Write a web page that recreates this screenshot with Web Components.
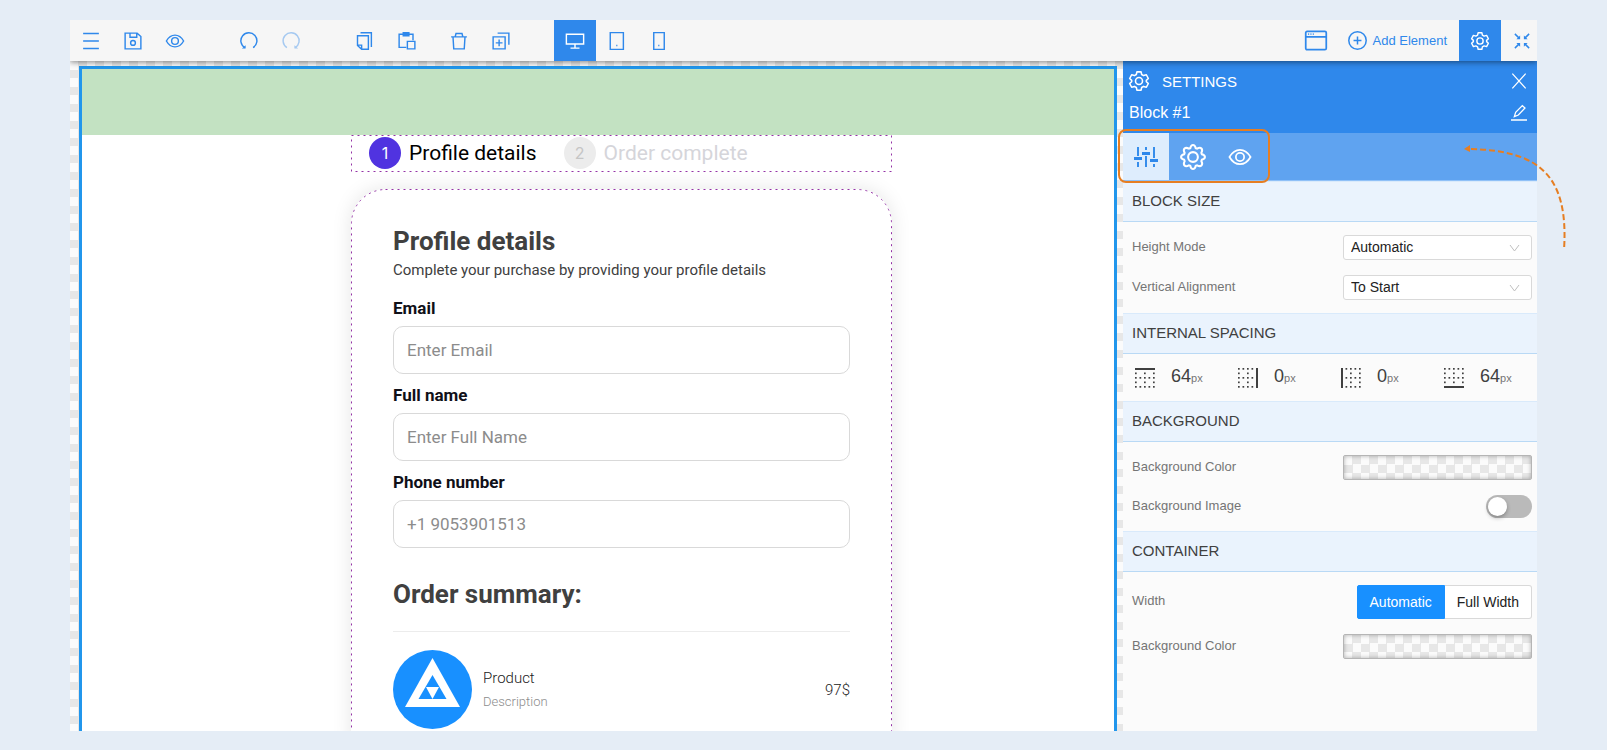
<!DOCTYPE html>
<html lang="en">
<head>
<meta charset="UTF-8">
<title>Block editor</title>
<style>
  :root {
    --blue: #2f88eb;
    --checker: repeating-conic-gradient(#e7e7e7 0% 25%, #fbfbfb 0% 50%);
  }

  body {
    margin: 0;
    background: #e5edf6;
    font-family: "Liberation Sans", Arial, sans-serif;
  }
</style>
</head>
<body>
<page-editor></page-editor>

<script>
/**
 * Iconos de la interfaz, dibujados sobre una rejilla de 24x24
 */
const ICONS = {
  menu: '<path d="M1.500 2h21M1.500 12h21M1.500 22h21"/>',
  save: '<path d="M1.500 1.500h16l5 4.500v16.500h-21zM8 2v5h9V2"/><circle cx="12" cy="14.500" r="3.200"/>',
  eye: '<path d="M.500 12C6.500 1.500 17.500 1.500 23.500 12C17.500 22.500 6.500 22.500 .500 12z"/><circle cx="12" cy="12" r="4.500"/>',
  undo: '<path d="M6.500 21A10.700 10.700 0 1 1 17.500 20.800"/><path d="M7.500 17.500V22H2.500z" fill="currentColor" stroke="none"/>',
  redo: '<path d="M17.500 21A10.700 10.700 0 1 0 6.500 20.800"/><path d="M16.500 17.500V22h5z" fill="currentColor" stroke="none"/>',
  copy: '<path d="M2 5h14.500v18H7.500L2 18zM2 17.500h5.500V23M6 1h14.500v19"/>',
  paste: '<path d="M11 20.500H1.500V3h18.500v8M12.500 12.500h10v10h-10z"/><path d="M7 1h7.500v4H7z" fill="currentColor"/>',
  trash: '<path d="M1.500 6.500h21M7 6l1-4h8l1 4M4 6.500l1 16h14l1-16"/>',
  duplicate: '<path d="M1.500 6.500h16v16h-16zM7.500 1.500h15v15.500M9.500 10v9M5 14.500h9"/>',
  desktop: '<path d="M.500 3h23v13H.500zM12 16v5.500M6 21.500h12"/>',
  tablet: '<path d="M3 .800h17.500v22.400H3z"/><path d="M11 18h1.500"/>',
  phone: '<path d="M5 .800h14v22.400H5z"/><path d="M11 18h1.500"/>',
  plus: '<circle cx="12" cy="12" r="11"/><path d="M12 7v10M7 12h10"/>',
  window: '<rect x="0.800" y="1.500" width="22.400" height="20" rx="1.500"/><path d="M1 7.500h22M3.500 4.500h1M6 4.500h1M8.500 4.500h1" />',
  collapse: '<path d="M2.500 2.500l6 6M21.500 2.500l-6 6M2.500 21.500l6-6M21.500 21.500l-6-6"/><path d="M9.500 4.500v5h-5zM14.500 4.500v5h5zM9.500 19.500v-5h-5zM14.500 19.500v-5h5z" fill="currentColor" stroke="none"/>',
  gear: '<path d="M9.500 1h5l.7 3.200 2.300 1.300 3.300-1L23.200 9l-2.400 2.200v1.600l2.400 2.200-2.400 4.500-3.300-1-2.300 1.300-.7 3.200h-5l-.7-3.200-2.300-1.300-3.300 1L.800 15l2.400-2.200v-1.600L.800 9l2.400-4.500 3.300 1 2.300-1.300z" stroke-linejoin="round"/><circle cx="12" cy="12" r="4.200"/>',
  cog: '<path d="M9.500 3.800Q10.200 1 12 1T14.500 3.800L15.800 4.300Q18.500 2.800 19.800 4.200T19.700 8.200L20.200 9.500Q23 10.200 23 12T20.200 14.500L19.700 15.800Q21.200 18.500 19.800 19.800T15.800 19.700L14.500 20.200Q13.800 23 12 23T9.500 20.200L8.200 19.700Q5.500 21.200 4.200 19.800T4.300 15.800L3.800 14.500Q1 13.800 1 12T3.800 9.500L4.300 8.200Q2.800 5.500 4.200 4.200T8.200 4.300z"/><circle cx="12" cy="12" r="4.500"/>',
  sliders: '<path d="M4 2v9M4 17v5M12 2v3M12 11v11M20 2v11M20 19v3"/><path d="M0 13.500h8M8 8.500h8M16 15.500h8" stroke-width="3"/>',
  close: '<path d="M2 1l20 22M22 1L2 23"/>',
  pencil: '<path d="M5 17.500l2-6.500L17 1l4 3.500L11 15zM0 22.500h24"/>'
};

/**
 * UiIcon - Icono SVG, el tamaño se toma de --icon-size
 */
class UiIcon extends HTMLElement {
  connectedCallback() {
    if (this.shadowRoot) return;
    this.attachShadow({ mode: 'open' });
    this.shadowRoot.innerHTML = `
      <style>
        :host {
          display: inline-block;
          width: var(--icon-size, 18px);
          height: var(--icon-size, 18px);
          flex: none;
        }

        svg {
          display: block;
          width: 100%;
          height: 100%;
          overflow: visible;
        }
      </style>
      <svg viewBox="0 0 24 24" fill="none" stroke="currentColor" stroke-width="1.900" aria-hidden="true">${ICONS[this.getAttribute('name')]}</svg>
    `;
  }
}

/**
 * ToolButton - Botón de la barra superior
 */
class ToolButton extends HTMLElement {
  connectedCallback() {
    this.attachShadow({ mode: 'open' });
    this.shadowRoot.innerHTML = `
      <style>
        :host {
          display: flex;
          flex: none;
        }

        button {
          display: flex;
          align-items: center;
          justify-content: center;
          gap: 6px;
          min-width: 42px;
          height: 41px;
          padding: 0;
          border: 0;
          background: none;
          color: var(--blue);
          font: inherit;
          font-size: 13px;
          cursor: pointer;
        }

        button:disabled {
          opacity: 0.4;
        }

        :host([active]) button {
          background: var(--blue);
          color: #fff;
        }
      </style>
      <button aria-label="${this.getAttribute('label')}" ${this.hasAttribute('off') ? 'disabled' : ''}>
        <ui-icon name="${this.getAttribute('icon')}"></ui-icon><slot></slot>
      </button>
    `;
  }
}

/**
 * EditorToolbar - Barra de herramientas superior
 */
class EditorToolbar extends HTMLElement {
  connectedCallback() {
    this.attachShadow({ mode: 'open' });
    this.shadowRoot.innerHTML = `
      <style>
        :host {
          display: flex;
          height: 41px;
          background: #f6f6f6;
          box-shadow: 0 1px 6px rgba(0, 0, 0, 0.5);
          /* la sombra solo cae hacia abajo */
          clip-path: inset(0 0 -8px 0);
          position: relative;
          z-index: 2;
        }

        .groups {
          display: flex;
          flex: 1;
          gap: 32px;
        }

        .group {
          display: flex;
        }

        .edit {
          gap: 10px;
        }

        .end {
          display: flex;
        }

        .window {
          --icon-size: 22px;
          margin-right: 11px;
        }

        .add {
          --icon-size: 19px;
          margin-right: 12px;
        }

        .fold {
          margin-right: -6px;
        }
      </style>
      <div class="groups">
        <div class="group">
          <tool-button icon="menu" label="Menu"></tool-button>
          <tool-button icon="save" label="Save"></tool-button>
          <tool-button icon="eye" label="Preview"></tool-button>
        </div>
        <div class="group">
          <tool-button icon="undo" label="Undo"></tool-button>
          <tool-button icon="redo" label="Redo" off></tool-button>
        </div>
        <div class="group edit">
          <div class="group">
            <tool-button icon="copy" label="Copy"></tool-button>
            <tool-button icon="paste" label="Paste"></tool-button>
          </div>
          <div class="group">
            <tool-button icon="trash" label="Delete"></tool-button>
            <tool-button icon="duplicate" label="Duplicate"></tool-button>
          </div>
        </div>
        <div class="group">
          <tool-button icon="desktop" label="Desktop" active></tool-button>
          <tool-button icon="tablet" label="Tablet"></tool-button>
          <tool-button icon="phone" label="Phone"></tool-button>
        </div>
      </div>
      <div class="end">
        <tool-button class="window" icon="window" label="Window"></tool-button>
        <tool-button class="add" icon="plus" label="Add Element">Add Element</tool-button>
        <tool-button icon="gear" label="Settings" active></tool-button>
        <tool-button class="fold" icon="collapse" label="Collapse"></tool-button>
      </div>
    `;
  }
}

/**
 * FormField - Etiqueta y caja de texto del formulario
 */
class FormField extends HTMLElement {
  connectedCallback() {
    this.attachShadow({ mode: 'open' });
    this.shadowRoot.innerHTML = `
      <style>
        :host {
          display: block;
          margin-bottom: 9px;
        }

        label {
          display: block;
          margin-bottom: 6px;
          color: #101018;
          font-size: 17px;
          font-weight: 700;
          line-height: 24px;
        }

        input {
          display: block;
          box-sizing: border-box;
          width: 100%;
          height: 48px;
          padding: 0 13px;
          border: 1px solid #d9d9d9;
          border-radius: 10px;
          background: #fff;
          font: inherit;
          font-size: 17px;
        }

        input::placeholder {
          color: #8c8c8c;
          opacity: 1;
        }
      </style>
      <label for="field">${this.getAttribute('label')}</label>
      <input id="field" type="${this.getAttribute('type')}" placeholder="${this.getAttribute('placeholder')}">
    `;
  }
}

/**
 * StepItem - Paso numerado del proceso de compra
 */
class StepItem extends HTMLElement {
  connectedCallback() {
    this.attachShadow({ mode: 'open' });
    this.shadowRoot.innerHTML = `
      <style>
        :host {
          display: flex;
          align-items: center;
          gap: 8px;
          color: #d5d5da;
          font-size: 21px;
          line-height: 32px;
          white-space: nowrap;
        }

        .number {
          display: grid;
          place-items: center;
          width: 32px;
          height: 32px;
          border-radius: 50%;
          background: #ececec;
          color: #c5c5c5;
          font-family: Inter, sans-serif;
          font-size: 16px;
        }

        :host([active]) {
          color: #000;
        }

        :host([active]) .number {
          background: #5033e0;
          color: #fff;
        }
      </style>
      <span class="number">${this.getAttribute('number')}</span>
      <span><slot></slot></span>
    `;
  }
}

/**
 * DashOutline - Contorno discontinuo que rodea al contenido editable
 */
class DashOutline extends HTMLElement {
  connectedCallback() {
    this.attachShadow({ mode: 'open' });
    this.shadowRoot.innerHTML = `
      <style>
        :host {
          position: absolute;
          inset: 0 1px 1px 0;
          pointer-events: none;
        }

        svg {
          display: block;
          width: 100%;
          height: 100%;
          overflow: visible;
        }
      </style>
      <svg aria-hidden="true">
        <rect x="0.500" y="0.500" width="100%" height="100%" rx="${this.getAttribute('radius')}"
          fill="none" stroke="#9433a6" stroke-dasharray="2 4"/>
      </svg>
    `;
  }
}

/**
 * PageCanvas - Lienzo con la página que se edita
 */
class PageCanvas extends HTMLElement {
  connectedCallback() {
    this.attachShadow({ mode: 'open' });
    this.shadowRoot.innerHTML = `
      <style>
        :host {
          display: flex;
          flex: 1;
          min-width: 0;
          padding: 5px 6px 0 9px;
          overflow: hidden;
          background: var(--checker) 0 0 / 17px 17px;
          font-family: Roboto, sans-serif;
        }

        .block {
          flex: 1;
          min-width: 0;
          border: 3px solid #2196ec;
          border-bottom: 0;
          background: #fff;
          overflow: hidden;
        }

        .spacing {
          height: 66px;
          background: #c3e2c2;
        }

        .columns {
          display: grid;
          grid-template-columns: 269fr 541fr 222fr;
        }

        .content {
          grid-column: 2;
          min-width: 0;
        }

        .steps {
          display: flex;
          gap: 27px;
          position: relative;
          padding: 2px 18px 3px;
        }

        .card {
          position: relative;
          margin-top: 17px;
          padding: 36px 42px;
          border-radius: 34px;
          box-shadow: 0 0 20px rgba(0, 0, 0, 0.1);
          color: #404040;
        }

        h2 {
          margin: 0;
          font-size: 26px;
          font-weight: 700;
          line-height: 32px;
        }

        p {
          margin: 0 0 13px;
          font-size: 15px;
          line-height: 26px;
        }

        .summary {
          margin-top: 30px;
          padding-bottom: 21px;
          border-bottom: 1px solid #ececec;
        }

        .product {
          display: flex;
          align-items: center;
          gap: 11px;
          margin-top: 18px;
          font-size: 15px;
          font-weight: 300;
          line-height: 24px;
        }

        .product svg {
          width: 79px;
          height: 79px;
        }

        .text {
          flex: 1;
          color: #222;
        }

        small {
          display: block;
          color: #8c8c8c;
          font-size: 13px;
        }

        .price {
          color: #222;
        }
      </style>
      <div class="block">
        <div class="spacing"></div>
        <div class="columns">
          <div class="content">
            <div class="steps">
              <step-item number="1" active>Profile details</step-item>
              <step-item number="2">Order complete</step-item>
              <dash-outline radius="0"></dash-outline>
            </div>
            <div class="card">
              <h2>Profile details</h2>
              <p>Complete your purchase by providing your profile details</p>
              <form-field label="Email" type="email" placeholder="Enter Email"></form-field>
              <form-field label="Full name" type="text" placeholder="Enter Full Name"></form-field>
              <form-field label="Phone number" type="tel" placeholder="+1 9053901513"></form-field>
              <h2 class="summary">Order summary:</h2>
              <div class="product">
                <svg viewBox="0 0 79 79" aria-hidden="true">
                  <circle cx="39.500" cy="39.500" r="39.500" fill="#1890ff"/>
                  <path d="M39.500 8L67 57H12z" fill="#fff"/>
                  <path d="M39.500 25L53.500 49h-28z" fill="#1890ff"/>
                  <path d="M33 37h13l-6.500 12z" fill="#fff"/>
                </svg>
                <div class="text">Product<small>Description</small></div>
                <span class="price">97$</span>
              </div>
              <dash-outline radius="34"></dash-outline>
            </div>
          </div>
        </div>
      </div>
    `;
  }
}

/**
 * SettingsSection - Sección con título del panel de ajustes
 */
class SettingsSection extends HTMLElement {
  connectedCallback() {
    this.attachShadow({ mode: 'open' });
    this.shadowRoot.innerHTML = `
      <style>
        :host {
          display: block;
        }

        h3 {
          box-sizing: border-box;
          height: 41px;
          margin: 0;
          padding: 0 9px;
          border-top: 1px solid #d9eafb;
          border-bottom: 1px solid #b9d9f5;
          background: #eaf3fd;
          color: #404040;
          font-size: 15px;
          font-weight: 400;
          line-height: 38px;
        }

        .rows {
          display: flex;
          flex-direction: column;
          gap: 15px;
          padding: 13px 5px 13px 9px;
        }
      </style>
      <h3>${this.getAttribute('heading')}</h3>
      <div class="rows"><slot></slot></div>
    `;
  }
}

/**
 * SettingRow - Nombre del ajuste y su control según el tipo
 */
class SettingRow extends HTMLElement {
  connectedCallback() {
    this.attachShadow({ mode: 'open' });
    this.render();
  }

  /**
   * Devuelve el control que corresponde al tipo
   */
  control() {
    const value = this.getAttribute('value');
    switch (this.getAttribute('type')) {
      case 'select':
        return `<span class="select"><select id="control"><option>${value}</option></select>
          <svg viewBox="0 0 11 8" aria-hidden="true"><path d="M1 1l4.500 6L10 1" fill="none" stroke="#bfbfbf"/></svg></span>`;
      case 'color':
        return '<button id="control" class="color"></button>';
      case 'toggle':
        return '<input id="control" class="toggle" type="checkbox" role="switch">';
      default:
        return '<div class="choice"><button id="control" class="on">Automatic</button><button>Full Width</button></div>';
    }
  }

  /**
   * Renderiza el contenido del componente
   */
  render() {
    this.shadowRoot.innerHTML = `
      <style>
        :host {
          display: flex;
          align-items: center;
          justify-content: space-between;
        }

        label {
          padding-bottom: 2px;
          color: #757575;
          font-size: 13px;
          line-height: 20px;
        }

        .select {
          display: grid;
          width: 189px;
        }

        select, .select svg {
          grid-area: 1 / 1;
        }

        select {
          appearance: none;
          height: 25px;
          padding: 0 7px 2px;
          border: 1px solid #d9d9d9;
          border-radius: 3px;
          background: #fff;
          color: #222;
          font: inherit;
          font-size: 14px;
        }

        .select svg {
          width: 11px;
          height: 8px;
          margin-right: 12px;
          place-self: center end;
          pointer-events: none;
        }

        .color {
          width: 189px;
          height: 25px;
          border: 1px solid #b5b5b5;
          border-radius: 2px;
          background: var(--checker) 0 0 / 17px 17px;
          box-shadow: inset 0 0 4px rgba(0, 0, 0, 0.3);
        }

        .toggle {
          appearance: none;
          display: flex;
          align-items: center;
          box-sizing: border-box;
          width: 46px;
          height: 23px;
          margin: 0;
          padding: 0 2px;
          border-radius: 12px;
          background: #bababa;
        }

        .toggle::before {
          content: "";
          width: 19px;
          height: 19px;
          border-radius: 50%;
          background: #fff;
          box-shadow: 0 2px 4px rgba(0, 0, 0, 0.3);
        }

        .choice {
          display: flex;
        }

        .choice button {
          height: 34px;
          padding: 0 12px;
          border: 1px solid #d9d9d9;
          border-left: 0;
          border-radius: 0 3px 3px 0;
          background: #fff;
          color: #222;
          font: inherit;
          font-size: 14px;
        }

        .choice .on {
          border: 1px solid #1890ff;
          border-radius: 2px 0 0 2px;
          background: #1890ff;
          color: #fff;
        }
      </style>
      <label for="control">${this.getAttribute('label')}</label>
      ${this.control()}
    `;
  }
}

/**
 * SpacingValue - Espaciado interno de un lado del bloque
 */
class SpacingValue extends HTMLElement {
  connectedCallback() {
    const bars = {
      top: 'M0 1h20',
      right: 'M19 0v20',
      left: 'M1 0v20',
      bottom: 'M0 19h20'
    };
    const side = this.getAttribute('side');
    let dots = '';
    for (let x = 0; x < 5; x++) {
      for (let y = 0; y < 5; y++) {
        const edge = { top: y === 0, right: x === 4, left: x === 0, bottom: y === 4 }[side];
        // el interior solo lleva la cruz central
        const hole = x % 2 === 1 && y % 2 === 1;
        if (!edge && !hole) dots += `<rect x="${x * 4.500}" y="${y * 4.500}" width="1.700" height="1.700"/>`;
      }
    }
    this.attachShadow({ mode: 'open' });
    this.shadowRoot.innerHTML = `
      <style>
        :host {
          display: flex;
          align-items: center;
          gap: 16px;
          height: 21px;
          color: #404040;
          font-size: 18px;
          line-height: 21px;
        }

        svg {
          width: 20px;
          height: 20px;
        }

        small {
          color: #757575;
          font-size: 11px;
        }
      </style>
      <svg viewBox="0 0 20 20" aria-hidden="true" fill="#404040">
        ${dots}<path d="${bars[side]}" stroke="#404040" stroke-width="2"/>
      </svg>
      <span>${this.getAttribute('value')}<small>px</small></span>
    `;
  }
}

/**
 * SettingsPanel - Panel lateral de ajustes del bloque
 */
class SettingsPanel extends HTMLElement {
  connectedCallback() {
    this.attachShadow({ mode: 'open' });
    this.shadowRoot.innerHTML = `
      <style>
        :host {
          display: block;
          position: relative;
          flex: none;
          width: 414px;
          background: #fbfbfb;
        }

        button {
          display: grid;
          place-items: center;
          padding: 0;
          border: 0;
          background: none;
          color: #fff;
        }

        header {
          box-sizing: border-box;
          height: 72px;
          padding: 4px 10px 4px 6px;
          background: var(--blue);
          color: #fff;
        }

        .line {
          display: flex;
          align-items: center;
          height: 32px;
          font-size: 16px;
        }

        .line span {
          flex: 1;
        }

        .title {
          gap: 13px;
          font-size: 15px;
          --icon-size: 20px;
        }

        .line button {
          --icon-size: 16px;
        }

        nav {
          display: flex;
          height: 47px;
          border-bottom: 1px solid #8fc0f7;
          background: #5fa3f0;
        }

        nav button {
          width: 47px;
          --icon-size: 22px;
        }

        nav .current {
          width: 46px;
          background: #deedfd;
          color: var(--blue);
          --icon-size: 24px;
        }

        nav .options {
          --icon-size: 26px;
        }

        .spacings {
          display: grid;
          grid-template-columns: repeat(4, 103px);
          padding-left: 3px;
        }

        .callout {
          position: absolute;
          top: 68px;
          left: -5px;
          width: 148px;
          height: 50px;
          border: 2px solid #e67e22;
          border-radius: 8px;
          pointer-events: none;
        }

        .arrow {
          position: absolute;
          top: 81px;
          left: 340px;
          width: 110px;
          height: 112px;
          overflow: visible;
          pointer-events: none;
        }
      </style>
      <header>
        <div class="line title"><ui-icon name="gear"></ui-icon><span>SETTINGS</span>
          <button aria-label="Close"><ui-icon name="close"></ui-icon></button></div>
        <div class="line"><span>Block #1</span>
          <button aria-label="Rename"><ui-icon name="pencil"></ui-icon></button></div>
      </header>
      <nav>
        <button class="current" aria-label="Style"><ui-icon name="sliders"></ui-icon></button>
        <button class="options" aria-label="Options"><ui-icon name="cog"></ui-icon></button>
        <button aria-label="Visibility"><ui-icon name="eye"></ui-icon></button>
      </nav>
      <settings-section heading="BLOCK SIZE">
        <setting-row type="select" label="Height Mode" value="Automatic"></setting-row>
        <setting-row type="select" label="Vertical Alignment" value="To Start"></setting-row>
      </settings-section>
      <settings-section heading="INTERNAL SPACING">
        <div class="spacings">
          <spacing-value side="top" value="64"></spacing-value>
          <spacing-value side="right" value="0"></spacing-value>
          <spacing-value side="left" value="0"></spacing-value>
          <spacing-value side="bottom" value="64"></spacing-value>
        </div>
      </settings-section>
      <settings-section heading="BACKGROUND">
        <setting-row type="color" label="Background Color"></setting-row>
        <setting-row type="toggle" label="Background Image"></setting-row>
      </settings-section>
      <settings-section heading="CONTAINER">
        <setting-row type="choice" label="Width"></setting-row>
        <setting-row type="color" label="Background Color"></setting-row>
      </settings-section>
      <div class="callout"></div>
      <svg class="arrow" viewBox="0 0 110 112" aria-hidden="true">
        <path d="M8 7C75 9 106 32 101 108" fill="none" stroke="#e67e22" stroke-width="2" stroke-dasharray="6 3"/>
        <path d="M1 7l6-4v7z" fill="#e67e22"/>
      </svg>
    `;
  }
}

/**
 * PageEditor - Editor completo
 */
class PageEditor extends HTMLElement {
  connectedCallback() {
    this.attachShadow({ mode: 'open' });
    this.shadowRoot.innerHTML = `
      <style>
        :host {
          display: flex;
          flex-direction: column;
          box-sizing: border-box;
          height: 100vh;
          padding: 20px 70px 19px;
        }

        main {
          display: flex;
          flex: 1;
          min-height: 0;
        }
      </style>
      <editor-toolbar></editor-toolbar>
      <main>
        <page-canvas></page-canvas>
        <settings-panel></settings-panel>
      </main>
    `;
  }
}

// Registrar los Web Components
customElements.define('ui-icon', UiIcon);
customElements.define('tool-button', ToolButton);
customElements.define('editor-toolbar', EditorToolbar);
customElements.define('form-field', FormField);
customElements.define('step-item', StepItem);
customElements.define('dash-outline', DashOutline);
customElements.define('page-canvas', PageCanvas);
customElements.define('settings-section', SettingsSection);
customElements.define('setting-row', SettingRow);
customElements.define('spacing-value', SpacingValue);
customElements.define('settings-panel', SettingsPanel);
customElements.define('page-editor', PageEditor);
</script>
</body>
</html>
